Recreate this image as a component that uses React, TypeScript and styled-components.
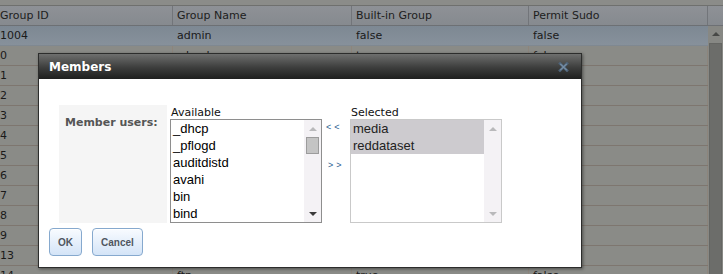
import React from 'react';
import styled, { createGlobalStyle } from 'styled-components';

const GlobalStyle = createGlobalStyle`
  html, body {
    margin: 0;
    padding: 0;
    background: #8a8b87;
  }
  body {
    font-family: 'DejaVu Sans', Verdana, sans-serif;
    font-size: 11px;
  }
`;

type Group = { id: string; name: string; builtin: string; sudo: string };

const groups: Group[] = [
    { id: '1004', name: 'admin', builtin: 'false', sudo: 'false' },
    { id: '0', name: 'wheel', builtin: 'true', sudo: 'false' },
    { id: '1', name: 'daemon', builtin: 'true', sudo: 'false' },
    { id: '2', name: 'kmem', builtin: 'true', sudo: 'false' },
    { id: '3', name: 'sys', builtin: 'true', sudo: 'false' },
    { id: '4', name: 'tty', builtin: 'true', sudo: 'false' },
    { id: '5', name: 'operator', builtin: 'true', sudo: 'false' },
    { id: '6', name: 'mail', builtin: 'true', sudo: 'false' },
    { id: '7', name: 'bin', builtin: 'true', sudo: 'false' },
    { id: '8', name: 'news', builtin: 'true', sudo: 'false' },
    { id: '9', name: 'man', builtin: 'true', sudo: 'false' },
    { id: '13', name: 'games', builtin: 'true', sudo: 'false' },
    { id: '14', name: 'ftp', builtin: 'true', sudo: 'false' },
];

const columnWidths = [173, 179, 177, 179];
const available = ['_dhcp', '_pflogd', 'auditdistd', 'avahi', 'bin', 'bind'];
const selected = ['media', 'reddataset'];

const Page = styled.div`
    position: relative;
    width: 723px;
    height: 274px;
    overflow: hidden;
    background: #8a8b87;
`;

const TopStrip = styled.div`
    height: 5px;
    background: #8b8c89;
    border-bottom: 1px solid #6f706e;
`;

const HeaderRow = styled.div`
    display: flex;
    height: 19px;
    background: linear-gradient(#8e9196, #868a8f);
    border-bottom: 1px solid #6d7074;
    color: #1d1d1d;
`;

const Cell = styled.div<{ $w: number; $first?: boolean; $line: string }>`
    width: ${(p) => p.$w}px;
    flex: none;
    box-sizing: border-box;
    padding-left: ${(p) => (p.$first ? 0 : 4)}px;
    line-height: 19px;
    white-space: nowrap;
    overflow: hidden;
    border-right: 1px solid ${(p) => p.$line};
`;

const GridBody = styled.div`
    display: flex;
`;

const Rows = styled.div`
    width: 708px;
    flex: none;
`;

const Row = styled.div<{ $selected?: boolean }>`
    display: flex;
    height: 19px;
    color: #1a1a1a;
    border-bottom: 1px solid ${(p) => (p.$selected ? '#7f8891' : '#7e766f')};
    background: ${(p) =>
        p.$selected ? 'linear-gradient(#7d8893, #87919b)' : '#8a8b87'};
`;

const PageScroll = styled.div`
    flex: 1;
    height: 260px;
    display: flex;
    flex-direction: column;
    align-items: center;
    padding-top: 6px;
    box-sizing: border-box;
    background: #878884;
`;

const UpTriangle = styled.div<{ $color: string }>`
    width: 0;
    height: 0;
    border-left: 4px solid transparent;
    border-right: 4px solid transparent;
    border-bottom: 4px solid ${(p) => p.$color};
`;

const DownTriangle = styled.div<{ $color: string }>`
    width: 0;
    height: 0;
    border-left: 4px solid transparent;
    border-right: 4px solid transparent;
    border-top: 4px solid ${(p) => p.$color};
`;

const PageThumb = styled.div`
    margin-top: 7px;
    width: 13px;
    flex: 1;
    background: #6c6d6a;
    border: 1px solid #656663;
    box-sizing: border-box;
`;

const Dialog = styled.div`
    position: absolute;
    left: 38px;
    top: 53px;
    width: 544px;
    box-sizing: border-box;
    border: 1px solid #2c2d2c;
    box-shadow: 1px 1px 3px rgba(0, 0, 0, 0.45);
    background: #ffffff;
`;

const TitleBar = styled.div`
    height: 25px;
    display: flex;
    align-items: center;
    justify-content: space-between;
    padding: 0 10px;
    background: linear-gradient(#6e6f6e, #3c3d3c 55%, #1e1f1e);
    color: #ffffff;
    font-weight: bold;
    font-size: 12px;
`;

const CloseButton = styled.svg`
    display: block;
    margin-right: 2px;
`;

const DialogBody = styled.div`
    padding: 26px 10px 11px;
`;

const FormRow = styled.div`
    display: flex;
    margin-left: 10px;
`;

const FieldLabel = styled.div`
    width: 108px;
    height: 118px;
    box-sizing: border-box;
    padding: 11px 0 0 6px;
    background: #f5f5f5;
    color: #555555;
    font-weight: bold;
    line-height: 13px;
`;

const Chooser = styled.div`
    display: flex;
    margin-left: 3px;
`;

const ListColumn = styled.div`
    display: flex;
    flex-direction: column;
    width: 152px;
`;

const ColumnLabel = styled.div`
    height: 14px;
    line-height: 14px;
    padding-top: 1px;
    box-sizing: border-box;
    padding-left: 1px;
    color: #111111;
`;

const ListBox = styled.div<{ $border: string }>`
    display: flex;
    height: 104px;
    box-sizing: border-box;
    border: 1px solid ${(p) => p.$border};
    background: #ffffff;
`;

const Items = styled.div`
    flex: 1;
    overflow: hidden;
`;

const Item = styled.div<{ $selected?: boolean }>`
    height: 17px;
    line-height: 17px;
    padding-left: 2px;
    font-family: 'Liberation Sans', Arial, sans-serif;
    font-size: 13px;
    color: ${(p) => (p.$selected ? '#222222' : '#000000')};
    background: ${(p) => (p.$selected ? '#cdcbcf' : 'transparent')};
`;

const ListScroll = styled.div`
    width: 17px;
    display: flex;
    flex-direction: column;
    align-items: center;
    background: #f4f2f5;
`;

const ScrollButton = styled.div`
    height: 17px;
    width: 17px;
    display: flex;
    align-items: center;
    justify-content: center;
`;

const ListThumb = styled.div`
    width: 13px;
    height: 17px;
    box-sizing: border-box;
    background: #c4c4c4;
    border: 1px solid #9c9c9c;
`;

const Spacer = styled.div`
    flex: 1;
`;

const MoveColumn = styled.div`
    width: 28px;
    display: flex;
    flex-direction: column;
    padding-top: 15px;
    box-sizing: border-box;
`;

const MoveLink = styled.a<{ $indent: number; $gap: number }>`
    display: block;
    margin-top: ${(p) => p.$gap}px;
    padding-left: ${(p) => p.$indent}px;
    line-height: 14px;
    font-family: 'Liberation Sans', Arial, sans-serif;
    font-size: 9px;
    letter-spacing: 3px;
    color: #2a5d90;
    text-decoration: none;
    cursor: pointer;
`;

const ButtonRow = styled.div`
    display: flex;
    gap: 10px;
    margin-top: 5px;
`;

const Button = styled.button`
    height: 28px;
    padding: 0 8px;
    border: 1px solid #86a9ce;
    border-radius: 4px;
    background: linear-gradient(#f8fbff, #d4e4f7);
    box-shadow: inset 0 1px 0 #ffffff;
    color: #4f5660;
    font-family: 'Liberation Sans', Arial, sans-serif;
    font-weight: bold;
    font-size: 10px;
    cursor: pointer;
`;

const headers = ['Group ID', 'Group Name', 'Built-in Group', 'Permit Sudo'];

const App = () => {
    return (
        <>
            <GlobalStyle />
            <Page>
                <TopStrip />
                <HeaderRow>
                    {headers.map((h, i) => (
                        <Cell key={h} $w={columnWidths[i]} $first={i === 0} $line="#72757a">
                            {h}
                        </Cell>
                    ))}
                </HeaderRow>
                <GridBody>
                    <Rows>
                        {groups.map((g, idx) => (
                            <Row key={g.id} $selected={idx === 0}>
                                {[g.id, g.name, g.builtin, g.sudo].map((v, i) => (
                                    <Cell
                                        key={i}
                                        $w={columnWidths[i]}
                                        $first={i === 0}
                                        $line={idx === 0 ? 'transparent' : '#8d857c'}
                                    >
                                        {v}
                                    </Cell>
                                ))}
                            </Row>
                        ))}
                    </Rows>
                    <PageScroll>
                        <UpTriangle $color="#474846" />
                        <PageThumb />
                    </PageScroll>
                </GridBody>

                <Dialog>
                    <TitleBar>
                        <span>Members</span>
                        {/* close "x", dull blue like the reference */}
                        <CloseButton width="11" height="10" viewBox="0 0 11 10">
                            <path
                                d="M2 1.5 L9 8.5 M9 1.5 L2 8.5"
                                stroke="#4f6479"
                                strokeWidth="2.6"
                                strokeLinecap="square"
                            />
                            <path
                                d="M2.3 1.8 L8.7 8.2 M8.7 1.8 L2.3 8.2"
                                stroke="#7890a8"
                                strokeWidth="1.2"
                            />
                        </CloseButton>
                    </TitleBar>
                    <DialogBody>
                        <FormRow>
                            <FieldLabel>Member users:</FieldLabel>
                            <Chooser>
                                <ListColumn>
                                    <ColumnLabel>Available</ColumnLabel>
                                    <ListBox $border="#8e8e8e">
                                        <Items>
                                            {available.map((u) => (
                                                <Item key={u}>{u}</Item>
                                            ))}
                                        </Items>
                                        <ListScroll>
                                            <ScrollButton>
                                                <UpTriangle $color="#b9b9bb" />
                                            </ScrollButton>
                                            <ListThumb />
                                            <Spacer />
                                            <ScrollButton>
                                                <DownTriangle $color="#3a3a3a" />
                                            </ScrollButton>
                                        </ListScroll>
                                    </ListBox>
                                </ListColumn>
                                <MoveColumn>
                                    <MoveLink $indent={4} $gap={0}>&lt;&lt;</MoveLink>
                                    <MoveLink $indent={6} $gap={24}>&gt;&gt;</MoveLink>
                                </MoveColumn>
                                <ListColumn>
                                    <ColumnLabel>Selected</ColumnLabel>
                                    <ListBox $border="#c9c9c9">
                                        <Items>
                                            {selected.map((u) => (
                                                <Item key={u} $selected>
                                                    {u}
                                                </Item>
                                            ))}
                                        </Items>
                                        <ListScroll>
                                            <ScrollButton>
                                                <UpTriangle $color="#b9b9bb" />
                                            </ScrollButton>
                                            <Spacer />
                                            <ScrollButton>
                                                <DownTriangle $color="#b9b9bb" />
                                            </ScrollButton>
                                        </ListScroll>
                                    </ListBox>
                                </ListColumn>
                            </Chooser>
                        </FormRow>
                        <ButtonRow>
                            <Button>OK</Button>
                            <Button>Cancel</Button>
                        </ButtonRow>
                    </DialogBody>
                </Dialog>
            </Page>
        </>
    );
};

export default App;
